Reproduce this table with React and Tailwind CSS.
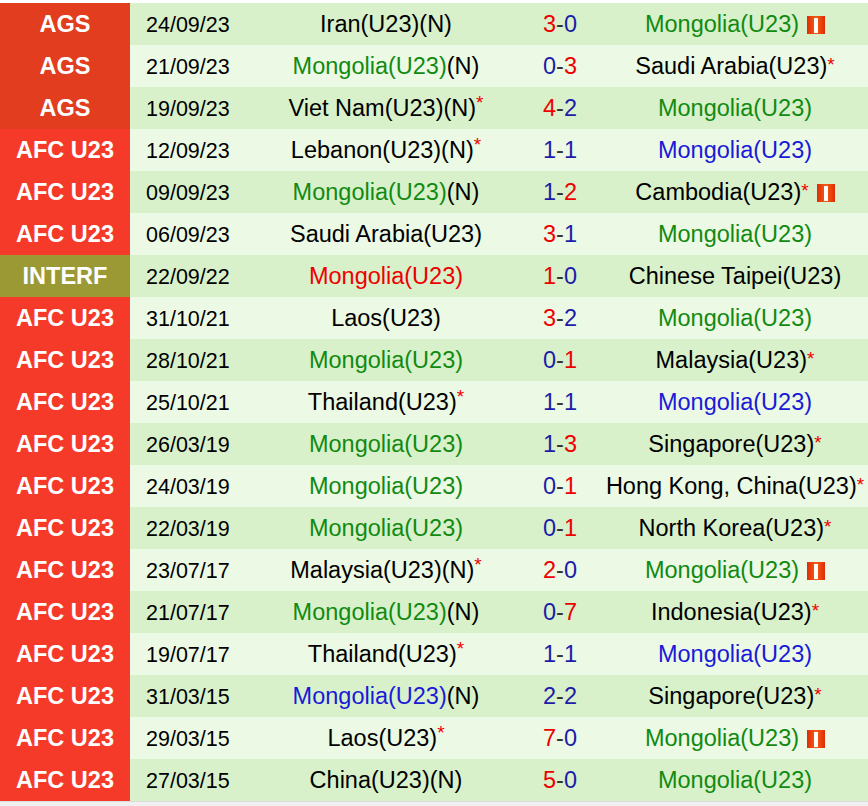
import React from 'react';

const G = 'text-[#128a12]';
const B = 'text-[#1a1ad8]';
const R = 'text-[#ee0000]';
const K = 'text-black';

const LABELS = {
  AGS: 'bg-[#e23d1e]',
  'AFC U23': 'bg-[#f63a2a]',
  INTERF: 'bg-[#9a9934]',
};

// [league, date, home, homeColor, homeSuffix, homeStar, h, a, away, awayColor, awayStar, card]
const rows = [
  ['AGS', '24/09/23', 'Iran(U23)', K, '(N)', false, 3, 0, 'Mongolia(U23)', G, false, true],
  ['AGS', '21/09/23', 'Mongolia(U23)', G, '(N)', false, 0, 3, 'Saudi Arabia(U23)', K, true, false],
  ['AGS', '19/09/23', 'Viet Nam(U23)', K, '(N)', true, 4, 2, 'Mongolia(U23)', G, false, false],
  ['AFC U23', '12/09/23', 'Lebanon(U23)', K, '(N)', true, 1, 1, 'Mongolia(U23)', B, false, false],
  ['AFC U23', '09/09/23', 'Mongolia(U23)', G, '(N)', false, 1, 2, 'Cambodia(U23)', K, true, true],
  ['AFC U23', '06/09/23', 'Saudi Arabia(U23)', K, '', false, 3, 1, 'Mongolia(U23)', G, false, false],
  ['INTERF', '22/09/22', 'Mongolia(U23)', R, '', false, 1, 0, 'Chinese Taipei(U23)', K, false, false],
  ['AFC U23', '31/10/21', 'Laos(U23)', K, '', false, 3, 2, 'Mongolia(U23)', G, false, false],
  ['AFC U23', '28/10/21', 'Mongolia(U23)', G, '', false, 0, 1, 'Malaysia(U23)', K, true, false],
  ['AFC U23', '25/10/21', 'Thailand(U23)', K, '', true, 1, 1, 'Mongolia(U23)', B, false, false],
  ['AFC U23', '26/03/19', 'Mongolia(U23)', G, '', false, 1, 3, 'Singapore(U23)', K, true, false],
  ['AFC U23', '24/03/19', 'Mongolia(U23)', G, '', false, 0, 1, 'Hong Kong, China(U23)', K, true, false],
  ['AFC U23', '22/03/19', 'Mongolia(U23)', G, '', false, 0, 1, 'North Korea(U23)', K, true, false],
  ['AFC U23', '23/07/17', 'Malaysia(U23)', K, '(N)', true, 2, 0, 'Mongolia(U23)', G, false, true],
  ['AFC U23', '21/07/17', 'Mongolia(U23)', G, '(N)', false, 0, 7, 'Indonesia(U23)', K, true, false],
  ['AFC U23', '19/07/17', 'Thailand(U23)', K, '', true, 1, 1, 'Mongolia(U23)', B, false, false],
  ['AFC U23', '31/03/15', 'Mongolia(U23)', B, '(N)', false, 2, 2, 'Singapore(U23)', K, true, false],
  ['AFC U23', '29/03/15', 'Laos(U23)', K, '', true, 7, 0, 'Mongolia(U23)', G, false, true],
  ['AFC U23', '27/03/15', 'China(U23)', K, '(N)', false, 5, 0, 'Mongolia(U23)', G, false, false],
];

const Star = () => <span className="text-[#ee0000] text-[19px] relative -top-[2px]">*</span>;

const Card = () => (
  <span className="ml-2 w-[18px] h-[18px] bg-gradient-to-r from-[#e02a08] via-[#f45c12] to-[#e02a08] flex items-center justify-center">
    <span className="w-[4px] h-[15px] bg-white"></span>
  </span>
);

const scoreColor = (x, y) => (x > y ? R : 'text-[#1c1ca8]');

export default function App() {
  return (
    <div
      className="w-[868px] h-[806px] bg-[#f0f0f0] overflow-hidden"
      style={{ fontFamily: '"Liberation Sans", Arial, sans-serif' }}
    >
      <div className="bg-white h-[3px]"></div>
      {rows.map((r, i) => {
        const [league, date, home, hc, suffix, hStar, h, a, away, ac, aStar, card] = r;
        return (
          <div
            key={i}
            className={`grid grid-cols-[130px_140px_232px_116px_234px_1fr] h-[42px] items-center text-[23.5px] whitespace-nowrap ${
              i % 2 === 0 ? 'bg-[#d8f1ca]' : 'bg-[#ecf9e4]'
            }`}
          >
            <div className={`h-full flex items-center justify-center pt-[2px] text-white font-bold ${LABELS[league]}`}>
              {league}
            </div>
            <div className="pl-4 pt-[2px] text-[21.5px] text-black">{date}</div>
            <div className="flex justify-center pt-[2px]">
              <span className={hc}>{home}</span>
              {suffix && <span className="text-black">{suffix}</span>}
              {hStar && <Star />}
            </div>
            <div className="flex justify-center pt-[2px]">
              <span className={scoreColor(h, a)}>{h}</span>
              <span className="text-[#333]">-</span>
              <span className={scoreColor(a, h)}>{a}</span>
            </div>
            <div className="flex justify-center items-center pt-[2px]">
              <span className={ac}>{away}</span>
              {aStar && <Star />}
              {card && <Card />}
            </div>
            <div></div>
          </div>
        );
      })}
      <div className="border-t border-[#dcdcdc] h-[5px]"></div>
    </div>
  );
}
